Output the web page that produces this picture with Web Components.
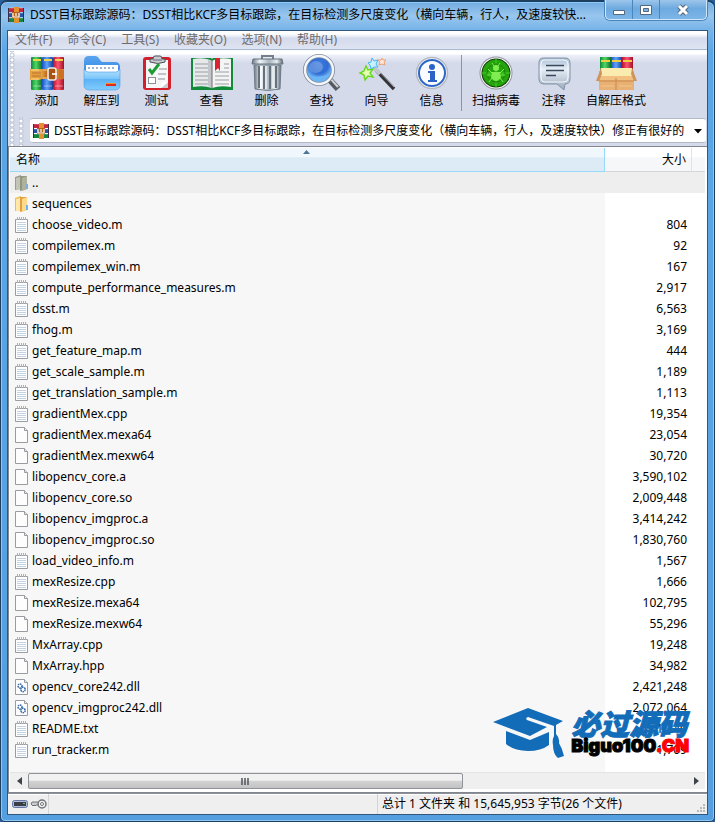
<!DOCTYPE html>
<html lang="zh-CN">
<head>
<meta charset="utf-8">
<title>WinRAR</title>
<style>
html { height: 100%; }
body { margin: 0; min-height: 100%; display: flex; background: #2b5f9e; font: 12px/16px "Noto Sans", "Noto Sans CJK SC", sans-serif; color: #000; }
archive-window { flex: 1; min-width: 0; }
</style>
</head>
<body>
<archive-window></archive-window>
<script>
const books = (u) => `
<defs>
<linearGradient id="${u}g"><stop offset="0" stop-color="#0d8a36"/><stop offset=".45" stop-color="#4fd765"/><stop offset="1" stop-color="#0b6e2a"/></linearGradient>
<linearGradient id="${u}b"><stop offset="0" stop-color="#1b4fc4"/><stop offset=".45" stop-color="#5fa4f8"/><stop offset="1" stop-color="#173f9e"/></linearGradient>
<linearGradient id="${u}r"><stop offset="0" stop-color="#b90f2c"/><stop offset=".45" stop-color="#fb5670"/><stop offset="1" stop-color="#a50d26"/></linearGradient>
<linearGradient id="${u}t"><stop offset="0" stop-color="#c9751f"/><stop offset=".25" stop-color="#f4b95a"/><stop offset=".5" stop-color="#b9641a"/><stop offset="1" stop-color="#e08d36"/></linearGradient>
</defs>`;

const ICONS = {
  add: `${books('a')}
<rect x="2" y="2" width="11" height="33" rx="1" fill="url(#ag)"/><rect x="13" y="2" width="11" height="33" rx="1" fill="url(#ab)"/><rect x="24" y="2" width="11" height="33" rx="1" fill="url(#ar)"/>
<path d="M4 5h8M15 5h8M26 5h8" stroke="#f3d24b" stroke-width="2"/><path d="M4 31h8M15 31h8M26 31h8" stroke="#ffffff70"/>
<path d="M2 14h33v10H2z" fill="url(#at)"/><path d="M1 14h10l2 2v7l-2 2H1z" fill="#e3a043"/><path d="M2 15h8M2 24h8" stroke="#ffdf8c"/><path d="M3 18h9M3 21h9" stroke="#bd7426"/>
<path d="M14 15h4M14 23h4" stroke="#f6cb7c"/><rect x="19" y="13" width="8" height="12" rx="2" fill="#a85514" stroke="#eceae6" stroke-width="1.600"/><path d="M23 19h5" stroke="#fff" stroke-width="1.600"/><path d="M30 14l5 1v9l-5 1z" fill="#cf6f22"/>`,
  extract: `<defs><linearGradient id="fa" x2="0" y2="1"><stop stop-color="#57a4f0"/><stop offset="1" stop-color="#2576d8"/></linearGradient><linearGradient id="fb" x2="0" y2="1"><stop stop-color="#b8e4fd"/><stop offset=".45" stop-color="#7cc6fa"/><stop offset=".5" stop-color="#5cb2f6"/><stop offset="1" stop-color="#82ccfb"/></linearGradient></defs>
<path d="M0 6q0-5 5-5h6q3 0 5 4l2 2h13q5 0 5 5v18H0z" fill="url(#fa)"/><path d="M2 10h32v11H2z" fill="#fff"/><path d="M4 12h2v2H4zm4 0h2v2H8zm4 0h2v2h-2zm4 0h2v2h-2zm4 0h2v2h-2zm4 0h2v2h-2zm4 0h2v2h-2z" fill="#9fb4cc"/>
<path d="M4 17h28q2 0 4-3v16q0 5-5 5H5q-5 0-5-5V14q2 3 4 3z" fill="url(#fb)" stroke="#4b9be8" stroke-width=".6"/><path d="M22 28h10v3H22z" fill="#e02b1c"/><path d="M22 28h10v1H22z" fill="#f78e28"/>`,
  test: `<rect x="4" y="2" width="28" height="33" rx="3" fill="#d3202d"/><rect x="7" y="5" width="22" height="28" fill="#f6f6f8"/><path d="M7 33h15l7-6v6z" fill="#c9cdd3"/><path d="M22 33l1-6h6z" fill="#fff"/>
<path d="M11 7V4h3q0-3 2-3h5q2 0 2 3h3v3q-7 3-15 0z" fill="#c8ccd2" stroke="#4c4f55"/><path d="M14 5h9" stroke="#6b6d72"/><path d="M10 14l3 4 7-9" fill="none" stroke="#1f9b35" stroke-width="3"/><path d="M20 14h8M19 19h8M19 24h7" stroke="#8b8f96"/><rect x="9.500" y="22.500" width="7" height="6" fill="#fff" stroke="#8b8f96"/>`,
  view: `<path d="M-3 3h20l1 1 1-1h20v32H-3z" fill="#118a3a"/><path d="M-1 4q12-2 19 2v27q-8-3-19-1z" fill="#e6e8ea"/><path d="M37 4q-12-2-19 2v27q8-3 19-1z" fill="#f4f4f4"/><path d="M14 5q3 0 4 2v26q-2-2-4-2z" fill="#c3c5ca"/>
<path d="M1 9h13M1 13h13M1 17h13M1 21h13M1 25h13M1 29h13M21 9h3M30 9h5M21 13h3M30 13h5M21 17h14M21 21h14M21 25h14M21 29h14" stroke="#9a9ea6"/><path d="M21 3h5v13l-2-3-3 3z" fill="#d72332"/><path d="M18 6v28" stroke="#696d72"/>`,
  remove: `<defs><linearGradient id="tr"><stop stop-color="#68747f"/><stop offset=".25" stop-color="#f2f6f8"/><stop offset=".55" stop-color="#a9b5bf"/><stop offset=".8" stop-color="#e6ecf0"/><stop offset="1" stop-color="#5b6670"/></linearGradient></defs>
<path d="M13 4V1h11v3" fill="none" stroke="#73808b" stroke-width="2"/><path d="M5 10h27l-1 24q-12 3-25 0z" fill="url(#tr)" stroke="#6f7c87"/><path d="M10 11v22M15 11v23M21 11v23M27 11v22" stroke="#65717c" stroke-width="2"/><path d="M12 11v22M17 11v23M24 11v22" stroke="#fff"/><path d="M4 4h29l1 5H3z" fill="url(#tr)" stroke="#65737f"/>`,
  find: `<defs><radialGradient id="fi" cy=".3"><stop stop-color="#3e7cdc"/><stop offset=".65" stop-color="#2e6bd4"/><stop offset="1" stop-color="#6fb0f2"/></radialGradient></defs>
<path d="M24 23l10 11" stroke="#55585e" stroke-width="6"/><path d="M25 22l9 10" stroke="#cfd3d8" stroke-width="2"/><circle cx="15" cy="15" r="14" fill="url(#fi)" stroke="#7f8b9a" stroke-width="4"/><circle cx="15" cy="15" r="14" fill="none" stroke="#f4f7fa" stroke-width="2.400"/><ellipse cx="12" cy="12" rx="7" ry="6" fill="#ffffff38"/><path d="M5 20q9 4 20-1-3 7-10 7t-10-6z" fill="#69b5f5"/>`,
  wizard: `<path d="M17 15l18 19" stroke="#333438" stroke-width="3.500"/><path d="M18 14l17 18" stroke="#a6a8ad"/><path d="M15 13l6 6" stroke="#c5c7cc" stroke-width="3.500"/>
<path d="M7 11l2 4 5-1-3 4 3 4-5-1-3 4-1-5-4-2 4-2z" fill="#e6ffb5" stroke="#66d81d" stroke-width="1.400"/><path d="M13 3l2 3 4-1-2 4 2 3-4 0-3 2-1-4-2-2 3-1z" fill="#c8f0ff" stroke="#43b6ee"/><path d="M23 3l1 2 3 0-2 2 1 3-3-1-3 1 1-3-2-2 3 0z" fill="#ffe9dc" stroke="#eaa27a"/>`,
  info: `<circle cx="18" cy="18" r="15.500" fill="#f8fafc" stroke="#b5bac0" stroke-width="1.500"/><circle cx="18" cy="18" r="13" fill="#fafcff" stroke="#2e66c8" stroke-width="2"/><circle cx="18" cy="12" r="3" fill="#2a62c7"/><path d="M14 16h7v9h2v2h-9v-2h2v-7h-2z" fill="#2a62c7"/>`,
  scan: `<circle cx="18" cy="18" r="16.500" fill="#8e9299"/><circle cx="18" cy="18" r="15.500" fill="#fff"/><circle cx="18" cy="18" r="14.500" fill="#12370c"/><circle cx="18" cy="18" r="13.500" fill="#25a50d"/><path d="M4 18h28M18 4v28" stroke="#42cf22"/><circle cx="18" cy="18" r="9" fill="none" stroke="#188408"/><circle cx="18" cy="13" r="3" fill="#7fec50"/><path d="M14 17h8l1 5q-2 4-5 4t-5-4z" fill="#7fec50"/><path d="M14 18l-4-4M22 18l4-4M13 20H9M23 20h4M14 23l-3 4M22 23l3 4M16 11l-2-3M20 11l2-3" stroke="#7fec50"/>`,
  comment: `<defs><linearGradient id="co" x2="0" y2="1"><stop stop-color="#a9bfd6"/><stop offset=".35" stop-color="#e6eef6"/><stop offset="1" stop-color="#9aaabb"/></linearGradient></defs>
<path d="M7 3h22q5 0 5 5v16q0 5-5 5l-1 6-7-6H8q-5 0-5-5V8q0-5 4-5z" fill="url(#co)" stroke="#8293a6"/><path d="M8 5h20q4 0 4 4v14q0 4-4 4H9q-4 0-4-4V9q0-4 3-4z" fill="none" stroke="#f4f8fc"/><path d="M10 10.500h18M10 15.500h18M10 20.500h10" stroke="#3a485c" stroke-width="1.600"/>`,
  sfx: `${books('s')}
<rect x="2" y="2" width="11" height="14" fill="url(#sg)"/><rect x="13" y="2" width="11" height="14" fill="url(#sb)"/><rect x="24" y="2" width="11" height="14" fill="url(#sr)"/><path d="M3 6h9M14 6h9M25 6h9" stroke="#f1cd42" stroke-width="2"/>
<path d="M1 16h35v19H1z" fill="#e8b072"/><path d="M3 13h31l2 8H1z" fill="#faecae"/><path d="M1 21h35v4H1z" fill="#f2c080"/><path d="M3 13l-5 13 3 0 3-7zM34 13l5 13-3 0-3-7z" fill="#cf935c"/><path d="M18 23v12M1 26h35" stroke="#c98b4c"/><path d="M3 31h13M21 31h13" stroke="#f3c58f"/>`,
  rar: `<path d="M1 1h14v4H1z" fill="#c22741"/><path d="M1 6h14v4H1z" fill="#2554a6"/><path d="M1 11h14v4H1z" fill="#16863c"/><path d="M1 1h14M1 11h14M1 6h14" stroke="#ffffff50"/><path d="M0 1h1v14H0zM15 1h1v14h-1z" fill="#3c2b49"/><path d="M6 0h5v16H6z" fill="#e38f32"/><path d="M4 5h8v6H4z" fill="#b7621c"/><path d="M5 6v4h6V6M8 6v3" fill="none" stroke="#fff" stroke-width="1.200"/>`,
  up: `<path d="M0 2l6-2v14l-6 1z" fill="#999c90"/><path d="M1 3l4-1v12l-4 1z" fill="#c2c4b8"/><path d="M5 1h7v13l-7 2z" fill="#92967d"/><path d="M7 3l5-2v13l-5 2z" fill="#aeb29c"/><path d="M11 9h2v5h-2z" fill="#83acd5"/>`,
  folder: `<path d="M0 2l6-2v14l-6 1z" fill="#edbd50"/><path d="M1 3l4-1v12l-4 1z" fill="#ffe8a8"/><path d="M5 1h7v13l-7 2z" fill="#e3a040"/><path d="M7 3l5-2v13l-5 2z" fill="#ffd88a"/><path d="M11 9h2v5h-2z" fill="#6db5ef"/>`,
  text: `<path d="M.5 2.500h12v13H.5z" fill="#fff" stroke="#989ba0"/><path d="M2.500 0v3M4.500 0v3M6.500 0v3M8.500 0v3M10.500 0v3" stroke="#aeb1b5"/><path d="M2 5.500h9M2 7.500h9M2 9.500h9M2 11.500h9M2 13.500h9" stroke="#c3d3e4"/>`,
  blank: `<path d="M.5.5h9l3 3v12H.5z" fill="#fdfdfd" stroke="#989ba0"/><path d="M9.500.5v3h3" fill="#e8e8e8" stroke="#989ba0"/>`,
  dll: `<path d="M.5.5h9l3 3v12H.5z" fill="#fdfdfd" stroke="#989ba0"/><path d="M9.500.5v3h3" fill="#e8e8e8" stroke="#989ba0"/><circle cx="5" cy="7" r="2" fill="#fff" stroke="#3166a4" stroke-width="1.500" stroke-dasharray="1.500 .6"/><circle cx="8" cy="10.500" r="2.200" fill="#fff" stroke="#3166a4" stroke-width="1.500" stroke-dasharray="1.500 .6"/>`,
  drive: `<rect x=".5" y="4.500" width="15" height="7" rx="2" fill="#b2bed8" stroke="#6678a6"/><path d="M2 6h12v4H2z" fill="#3a3d44"/><path d="M11 7h2v1h-2z" fill="#55c36a"/>`,
  key: `<circle cx="11" cy="8" r="4" fill="#f2f2f2" stroke="#707478" stroke-width="1.500"/><circle cx="11" cy="8" r="1.500" fill="#fff" stroke="#707478"/><path d="M7 6H1L0 8l2 2 1-1 1 1 1-1h2z" fill="#c9cbce" stroke="#707478"/>`
};
const SIZES = { rar: 16, up: 16, folder: 16, text: 16, blank: 16, dll: 16, drive: 16, key: 16 };

class GlyphIcon extends HTMLElement {
  constructor() {
    super();
    const name = this.getAttribute('name');
    const s = SIZES[name] || 36;
    this.attachShadow({ mode: 'open' }).innerHTML =
      `<style>:host{display:block;flex:none;width:${s}px;height:${s}px}svg{display:block;overflow:visible}</style>
       <svg width="${s}" height="${s}" viewBox="0 0 ${s} ${s}" fill="none" aria-hidden="true">${ICONS[name]}</svg>`;
  }
}
customElements.define('glyph-icon', GlyphIcon);

class TitleBar extends HTMLElement {
  constructor() {
    super();
    this.attachShadow({ mode: 'open' }).innerHTML = `
<style>
:host { display: flex; height: 30px; align-items: center; padding-left: 7px; gap: 6px; box-sizing: border-box; }
span { flex: 1; min-width: 0; white-space: nowrap; overflow: hidden; }
.controls { display: flex; align-self: flex-start; height: 20px; margin-right: 7px; border: 1px solid #d0e6f8; border-top: 0; border-radius: 0 0 5px 5px; box-sizing: border-box; box-shadow: 0 0 0 1px #4a86bb; background: linear-gradient(#9dc5ea, #6daae0 45%, #7db6e8); }
button { width: 27px; border: 0; border-right: 1px solid #4a86bb; padding: 0; background: none; display: grid; place-items: center; }
button:last-child { width: 46px; border-right: 0; }
</style>
<glyph-icon name="rar"></glyph-icon><span><slot></slot></span>
<div class="controls">
<button aria-label="最小化"><svg width="14" height="14" fill="none"><path d="M1.500 7.500h11v4h-11z" fill="#fff" stroke="#55687d"/></svg></button>
<button aria-label="最大化"><svg width="14" height="14" fill="none"><path d="M1.500 2.500h11v9h-11z" fill="#fff" stroke="#55687d"/><path d="M4.500 5.500h5v3h-5z" fill="#7db3e6" stroke="#55687d"/></svg></button>
<button aria-label="关闭"><svg width="14" height="14"><path d="M3 3l8 8M11 3l-8 8" stroke="#55687d" stroke-width="5"/><path d="M3 3l8 8M11 3l-8 8" stroke="#fff" stroke-width="3"/></svg></button>
</div>`;
  }
}
customElements.define('title-bar', TitleBar);

class MenuBar extends HTMLElement {
  constructor() {
    super();
    const items = ['文件(F)', '命令(C)', '工具(S)', '收藏夹(O)', '选项(N)', '帮助(H)'];
    this.attachShadow({ mode: 'open' }).innerHTML = `
<style>
:host { display: flex; height: 19px; gap: 15px; padding-left: 7px; box-sizing: border-box; border-bottom: 1px solid #a9b9cf; background: linear-gradient(#fff 0 15%, #e8ecf6 30%, #d5daec 40%, #dfe4f2); }
button { border: 0; padding: 0; background: none; font: inherit; font-size: 12px; line-height: 18px; color: #6d6d6d; white-space: nowrap; }
</style>${items.map(t => `<button>${t}</button>`).join('')}`;
  }
}
customElements.define('menu-bar', MenuBar);

class ToolButton extends HTMLElement {
  constructor() {
    super();
    this.attachShadow({ mode: 'open' }).innerHTML = `
<style>
:host { display: block; flex: 0 0 55px; }
:host([wide]) { flex-basis: 60px; }
:host([wider]) { flex-basis: 70px; }
button { width: 100%; border: 0; padding: 4px 0 0; background: none; font: inherit; color: #000; display: flex; flex-direction: column; align-items: center; gap: 2px; white-space: nowrap; }
</style><button><glyph-icon name="${this.getAttribute('icon')}"></glyph-icon><slot></slot></button>`;
  }
}
customElements.define('tool-button', ToolButton);

class ToolBar extends HTMLElement {
  constructor() {
    super();
    this.attachShadow({ mode: 'open' }).innerHTML = `
<style>
:host { display: grid; grid-template-columns: 9px 1fr; background: linear-gradient(#fff 0 3px, #eef1f9 4px, #d5daeb 12px); border-top: 1px solid #f8fafe; }
.grip { background: radial-gradient(circle at 2px 2px, #fff 1px, #b9c0d0 2px, transparent 3px) 2px 2px / 5px 5px repeat-y; }
.tools { display: flex; height: 66px; padding-left: 2px; }
hr { flex: none; width: 1px; height: 56px; margin: 4px 4px 0 2px; border: 0; background: #8d93a0; }
.address { display: grid; grid-template-columns: 12px 1fr; height: 29px; }
.combo { display: flex; align-items: center; gap: 5px; background: #fff; border: 1px solid #b4b9c8; border-width: 1px 0; border-radius: 3px; padding: 0 2px 0 3px; margin: 1px 1px 3px; min-width: 0; position: relative; }
select { appearance: none; flex: 1; min-width: 0; border: 0; padding: 0 15px 0 0; background: none; font: inherit; color: #000; outline: 0; }
.combo svg { position: absolute; right: 4px; top: 10px; pointer-events: none; }
</style>
<div class="grip"></div>
<div>
<div class="tools" role="toolbar">
<tool-button icon="add">添加</tool-button><tool-button icon="extract">解压到</tool-button><tool-button icon="test">测试</tool-button><tool-button icon="view">查看</tool-button><tool-button icon="remove">删除</tool-button><tool-button icon="find">查找</tool-button><tool-button icon="wizard">向导</tool-button><tool-button icon="info">信息</tool-button><hr><tool-button wide icon="scan">扫描病毒</tool-button><tool-button icon="comment">注释</tool-button><tool-button wider icon="sfx">自解压格式</tool-button>
</div>
<div class="address"><div class="grip"></div><div class="combo"><glyph-icon name="rar"></glyph-icon>
<select aria-label="地址"><option>DSST目标跟踪源码：DSST相比KCF多目标跟踪，在目标检测多尺度变化（横向车辆，行人，及速度较快）修正有很好的</option></select>
<svg width="8" height="5"><path d="M0 0h8L4 4.500z"/></svg></div></div>
</div>`;
  }
}
customElements.define('tool-bar', ToolBar);

const FILES = [
  ['up', '..', ''], ['folder', 'sequences', ''], ['text', 'choose_video.m', '804'], ['text', 'compilemex.m', '92'],
  ['text', 'compilemex_win.m', '167'], ['text', 'compute_performance_measures.m', '2,917'], ['text', 'dsst.m', '6,563'],
  ['text', 'fhog.m', '3,169'], ['text', 'get_feature_map.m', '444'], ['text', 'get_scale_sample.m', '1,189'],
  ['text', 'get_translation_sample.m', '1,113'], ['text', 'gradientMex.cpp', '19,354'], ['blank', 'gradientMex.mexa64', '23,054'],
  ['blank', 'gradientMex.mexw64', '30,720'], ['blank', 'libopencv_core.a', '3,590,102'], ['blank', 'libopencv_core.so', '2,009,448'],
  ['blank', 'libopencv_imgproc.a', '3,414,242'], ['blank', 'libopencv_imgproc.so', '1,830,760'], ['text', 'load_video_info.m', '1,567'],
  ['text', 'mexResize.cpp', '1,666'], ['blank', 'mexResize.mexa64', '102,795'], ['blank', 'mexResize.mexw64', '55,296'],
  ['text', 'MxArray.cpp', '19,248'], ['blank', 'MxArray.hpp', '34,982'], ['dll', 'opencv_core242.dll', '2,421,248'],
  ['dll', 'opencv_imgproc242.dll', '2,072,064'], ['text', 'README.txt', '1,240'], ['text', 'run_tracker.m', '1,709']
];

class FileList extends HTMLElement {
  constructor() {
    super();
    this.attachShadow({ mode: 'open' }).innerHTML = `
<style>
:host { display: flex; flex-direction: column; border: 1px solid #82868f; border-width: 1px 0 1px 1px; padding: 1px 2px 0 1px; background: #fff; position: relative; }
.area { flex: 1; display: flex; background: linear-gradient(#f7f7f7, #f7f7f7) no-repeat 0 0 / calc(100% - 100px) 100%; }
table { width: 100%; align-self: flex-start; border-collapse: separate; border-spacing: 0; table-layout: fixed; }
th { height: 24px; box-sizing: border-box; padding: 1px 5px 0 6px; font-weight: 400; text-align: left; background: linear-gradient(#fff 0 40%, #f6f7f8 42%); border-bottom: 1px solid #d5d5d5; border-right: 1px solid #e2e3e5; }
th.sorted { background: linear-gradient(#f0f8fe 0 40%, #dcebf5 42%); border-color: #96d9f9; position: relative; }
th.sorted svg { position: absolute; left: calc(50% - 4px); top: 2px; }
th:last-child { border-right: 0; }
th.size, td.size { text-align: right; }
td { height: 21px; padding: 0; white-space: nowrap; }
td.size { padding-right: 5px; }
tbody tr:first-child td { background: #eee; }
.name { display: flex; align-items: center; gap: 1px; padding-left: 5px; font-size: 12px; }
.bar { display: flex; height: 17px; margin: 0 0 3px; background: #efefef; border-top: 1px solid #e3e3e3; box-sizing: border-box; }
.bar button { width: 18px; border: 0; padding: 0; background: none; display: grid; place-items: center; flex: none; }
.track { flex: 1; display: flex; }
.thumb { width: 66%; border: 1px solid #8f9296; border-radius: 2px; box-sizing: border-box; background: linear-gradient(#f1f1f1 0 45%, #d2d2d2 50%, #c3c3c3); display: grid; place-items: center; }
</style>
<div class="area"><table>
<colgroup><col><col style="width:87px"><col style="width:13px"></colgroup>
<thead><tr><th class="sorted" aria-sort="ascending">名称<svg width="7" height="4"><path d="M0 4l3.500-4L7 4z" fill="#4d7594"/></svg></th><th class="size">大小</th><th></th></tr></thead>
<tbody>${FILES.map(([i, n, s]) => `<tr><td><div class="name"><glyph-icon name="${i}"></glyph-icon><span>${n}</span></div></td><td class="size">${s}</td><td></td></tr>`).join('')}</tbody>
</table></div>
<div class="bar"><button aria-label="向左滚动"><svg width="5" height="8"><path d="M5 0v8L0 4z" fill="#3d444c"/></svg></button>
<div class="track"><div class="thumb"><svg width="9" height="7"><path d="M1 0v7M4 0v7M7 0v7" stroke="#50555b" stroke-width="1.500"/></svg></div></div>
<button aria-label="向右滚动"><svg width="5" height="8"><path d="M0 0v8l5-4z" fill="#3d444c"/></svg></button></div>`;
  }
}
customElements.define('file-list', FileList);

class SiteMark extends HTMLElement {
  constructor() {
    super();
    this.attachShadow({ mode: 'open' }).innerHTML = `
<style>
:host { display: grid; grid-template-columns: 72px auto; gap: 6px; }
.cn { font: italic 900 29px/29px "Noto Sans CJK SC", sans-serif; color: #126cb8; -webkit-text-stroke: 1px #126cb8; white-space: nowrap; }
.en { font: 900 18px/18px Inter, "Noto Sans", sans-serif; color: #000; -webkit-text-stroke: 1px; white-space: nowrap; }
b { color: #f00; font-weight: 900; }
</style>
<svg width="72" height="52" viewBox="0 0 72 52" aria-hidden="true"><path d="M0 14L35 0l35 13-7 4v9q4 4 3 9 3 5 5 13l-6 2q-5-4-5-13-1-5 1-9V18L35 9q-3 1-1 3l20 7-17 9z" fill="#126cb8"/><path d="M13 23l24 9 19-8v13q-8 6-21 6-14 0-22-7z" fill="#126cb8"/></svg>
<div><div class="cn">必过源码</div><div class="en">Biguo100<b>.CN</b></div></div>`;
  }
}
customElements.define('site-mark', SiteMark);

class StatusBar extends HTMLElement {
  constructor() {
    super();
    this.attachShadow({ mode: 'open' }).innerHTML = `
<style>
:host { display: grid; grid-template-columns: 41px 1fr 1fr; height: 21px; background: #f0eff0; border-top: 1px solid #8c9098; box-shadow: inset 0 1px #fff; box-sizing: border-box; align-items: stretch; }
div { display: flex; align-items: center; border-right: 1px solid #d4d4d4; white-space: nowrap; min-width: 0; }
.icons { gap: 3px; padding-left: 4px; }
.total { border: 0; padding-left: 4px; justify-content: space-between; }
svg { align-self: flex-end; flex: none; }
</style>
<div class="icons"><glyph-icon name="drive"></glyph-icon><glyph-icon name="key"></glyph-icon></div><div></div>
<div class="total"><span>总计 1 文件夹 和 15,645,953 字节(26 个文件)</span><svg width="11" height="11"><path d="M7 1h2v2H7zM4 4h2v2H4zM7 4h2v2H7zM1 7h2v2H1zM4 7h2v2H4zM7 7h2v2H7z" fill="#b8b8b8"/></svg></div>`;
  }
}
customElements.define('status-bar', StatusBar);

class ArchiveWindow extends HTMLElement {
  constructor() {
    super();
    this.attachShadow({ mode: 'open' }).innerHTML = `
<style>
:host { display: flex; flex-direction: column; box-sizing: border-box; border: 1px solid #1d3f60; border-top-width: 2px; border-radius: 7px 7px 5px 5px; padding: 0 6px 6px; background: linear-gradient(#72ace1, #98c6ee 14px, #76b3e8 28px, #5ba6e5 50px, #559fe0); box-shadow: inset 0 0 0 1px #8ec7f3; }
title-bar { margin: -2px -6px 0; }
main { flex: 1; display: flex; flex-direction: column; border: 1px solid #31577c; background: #fff; position: relative; min-width: 0; }
file-list { flex: 1; }
site-mark { position: absolute; right: 18px; bottom: 54px; }
</style>
<title-bar>DSST目标跟踪源码：DSST相比KCF多目标跟踪，在目标检测多尺度变化（横向车辆，行人，及速度较快...</title-bar>
<main><menu-bar></menu-bar><tool-bar></tool-bar><file-list></file-list><status-bar></status-bar><site-mark></site-mark></main>`;
  }
}
customElements.define('archive-window', ArchiveWindow);
</script>
</body>
</html>
